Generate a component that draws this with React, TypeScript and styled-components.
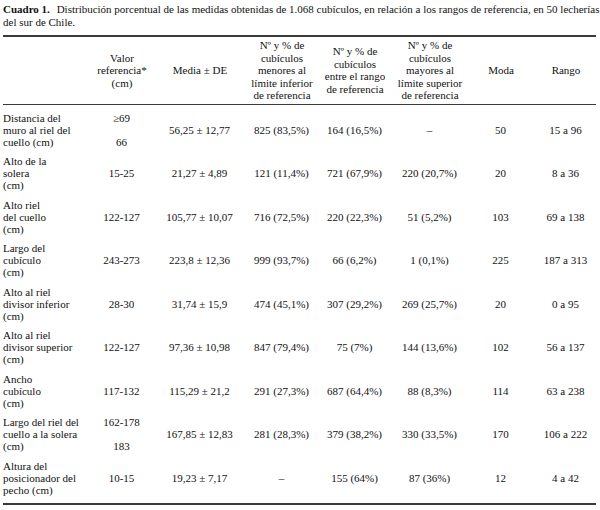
import React from 'react';
import styled, { createGlobalStyle } from 'styled-components';

const GlobalStyle = createGlobalStyle`
    body {
        margin: 0;
        background: #ffffff;
        font-family: "Liberation Serif", "Times New Roman", serif;
        color: #111111;
    }
`;

const Page = styled.div`
    width: 593px;
    padding: 3px 0 0 3px;
`;

const CaptionLine = styled.div<{ $justify?: boolean }>`
    font-size: 11px;
    line-height: 13px;
    white-space: nowrap;
    text-align: ${(p) => (p.$justify ? 'justify' : 'left')};
    text-align-last: ${(p) => (p.$justify ? 'justify' : 'left')};
`;

const CaptionLabel = styled.b`
    font-weight: 700;
    margin-right: 4px;
`;

const Table = styled.table`
    width: 593px;
    margin-top: 6px;
    border-collapse: collapse;
    table-layout: fixed;
    font-size: 11px;
`;

const HeadRow = styled.tr`
    border-top: 2px solid #3a3a3a;
    border-bottom: 1.5px solid #3a3a3a;
`;

const HeadCell = styled.th`
    font-weight: 400;
    line-height: 12.5px;
    padding: 2px 0 2px;
    text-align: center;
    vertical-align: middle;
`;

const BodyRow = styled.tr<{ $first?: boolean; $last?: boolean }>`
    border-bottom: ${(p) => (p.$last ? '2px solid #3a3a3a' : 'none')};

    & > td {
        padding-top: ${(p) => (p.$first ? '7px' : '3.75px')};
        padding-bottom: ${(p) => (p.$last ? '7.75px' : '3.75px')};
    }
`;

const Label = styled.td`
    line-height: 12px;
    text-align: left;
    vertical-align: middle;
    padding-left: 0;
`;

const Cell = styled.td<{ $shift?: number }>`
    line-height: 12px;
    text-align: center;
    vertical-align: middle;
    padding-left: ${(p) => p.$shift || 0}px;
`;

const Stack = styled.div`
    display: flex;
    flex-direction: column;
    align-items: center;
    justify-content: space-between;
    height: 36px;
`;

type Row = {
    label: string[];
    ref: string[];
    media: string;
    menores: string;
    entre: string;
    mayores: string;
    moda: string;
    rango: string;
};

const rows: Row[] = [
    { label: ['Distancia del', 'muro al riel del', 'cuello (cm)'], ref: ['≥69', '66'], media: '56,25 ± 12,77', menores: '825 (83,5%)', entre: '164 (16,5%)', mayores: '–', moda: '50', rango: '15 a 96' },
    { label: ['Alto de la', 'solera', '(cm)'], ref: ['15-25'], media: '21,27 ± 4,89', menores: '121 (11,4%)', entre: '721 (67,9%)', mayores: '220 (20,7%)', moda: '20', rango: '8 a 36' },
    { label: ['Alto riel', 'del cuello', '(cm)'], ref: ['122-127'], media: '105,77 ± 10,07', menores: '716 (72,5%)', entre: '220 (22,3%)', mayores: '51 (5,2%)', moda: '103', rango: '69 a 138' },
    { label: ['Largo del', 'cubículo', '(cm)'], ref: ['243-273'], media: '223,8 ± 12,36', menores: '999 (93,7%)', entre: '66 (6,2%)', mayores: '1 (0,1%)', moda: '225', rango: '187 a 313' },
    { label: ['Alto al riel', 'divisor inferior', '(cm)'], ref: ['28-30'], media: '31,74 ± 15,9', menores: '474 (45,1%)', entre: '307 (29,2%)', mayores: '269 (25,7%)', moda: '20', rango: '0 a 95' },
    { label: ['Alto al riel', 'divisor superior', '(cm)'], ref: ['122-127'], media: '97,36 ± 10,98', menores: '847 (79,4%)', entre: '75 (7%)', mayores: '144 (13,6%)', moda: '102', rango: '56 a 137' },
    { label: ['Ancho', 'cubículo', '(cm)'], ref: ['117-132'], media: '115,29 ± 21,2', menores: '291 (27,3%)', entre: '687 (64,4%)', mayores: '88 (8,3%)', moda: '114', rango: '63 a 238' },
    { label: ['Largo del riel del', 'cuello a la solera', '(cm)'], ref: ['162-178', '183'], media: '167,85 ± 12,83', menores: '281 (28,3%)', entre: '379 (38,2%)', mayores: '330 (33,5%)', moda: '170', rango: '106 a 222' },
    { label: ['Altura del', 'posicionador del', 'pecho (cm)'], ref: ['10-15'], media: '19,23 ± 7,17', menores: '–', entre: '155 (64%)', mayores: '87 (36%)', moda: '12', rango: '4 a 42' },
];

const lines = (parts: string[]) =>
    parts.map((t, i) => (
        <React.Fragment key={i}>
            {i > 0 && <br />}
            {t}
        </React.Fragment>
    ));

const App: React.FunctionComponent = (): JSX.Element => {
    return (
        <Page>
            <GlobalStyle />
            <CaptionLine $justify>
                <CaptionLabel>Cuadro 1.</CaptionLabel> Distribución porcentual de las medidas obtenidas de 1.068 cubículos, en relación a los rangos de referencia, en 50 lecherías
            </CaptionLine>
            <CaptionLine>del sur de Chile.</CaptionLine>
            <Table>
                <colgroup>
                    <col style={{ width: 82 }} />
                    <col style={{ width: 74 }} />
                    <col style={{ width: 82 }} />
                    <col style={{ width: 82 }} />
                    <col style={{ width: 64 }} />
                    <col style={{ width: 86 }} />
                    <col style={{ width: 56 }} />
                    <col style={{ width: 67 }} />
                </colgroup>
                <thead>
                    <HeadRow>
                        <HeadCell />
                        <HeadCell>{lines(['Valor', 'referencia*', '(cm)'])}</HeadCell>
                        <HeadCell>Media ± DE</HeadCell>
                        <HeadCell>{lines(['Nº y % de', 'cubículos', 'menores al', 'límite inferior', 'de referencia'])}</HeadCell>
                        <HeadCell>{lines(['Nº y % de', 'cubículos', 'entre el rango', 'de referencia'])}</HeadCell>
                        <HeadCell>{lines(['Nº y % de', 'cubículos', 'mayores al', 'límite superior', 'de referencia'])}</HeadCell>
                        <HeadCell>Moda</HeadCell>
                        <HeadCell style={{ paddingLeft: 7 }}>Rango</HeadCell>
                    </HeadRow>
                </thead>
                <tbody>
                    {rows.map((r, i) => (
                        <BodyRow key={i} $first={i === 0} $last={i === rows.length - 1}>
                            <Label>{lines(r.label)}</Label>
                            <Cell>
                                {r.ref.length > 1 ? (
                                    <Stack>
                                        <span>{r.ref[0]}</span>
                                        <span>{r.ref[1]}</span>
                                    </Stack>
                                ) : (
                                    r.ref[0]
                                )}
                            </Cell>
                            <Cell>{r.media}</Cell>
                            <Cell>{r.menores}</Cell>
                            <Cell>{r.entre}</Cell>
                            <Cell>{r.mayores}</Cell>
                            <Cell>{r.moda}</Cell>
                            <Cell $shift={7}>{r.rango}</Cell>
                        </BodyRow>
                    ))}
                </tbody>
            </Table>
        </Page>
    );
};

export default App;
